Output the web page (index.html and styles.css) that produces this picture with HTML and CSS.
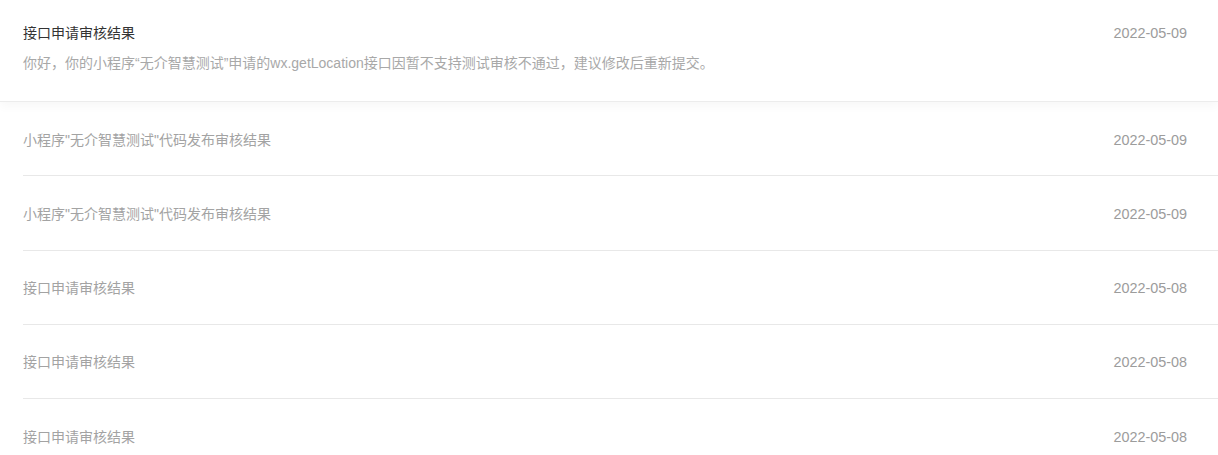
FILE: index.html
```html
<!DOCTYPE html>
<html lang="zh">
<head>
<meta charset="utf-8">
<title>消息</title>
<link rel="stylesheet" href="styles.css">
</head>
<body>
<ul class="msg-list">
  <li class="msg msg-open">
    <div class="msg-main">
      <div class="msg-title">接口申请审核结果</div>
      <div class="msg-desc">你好，你的小程序“无介智慧测试”申请的wx.getLocation接口因暂不支持测试审核不通过，建议修改后重新提交。</div>
    </div>
    <div class="msg-date">2022-05-09</div>
  </li>
  <li class="msg">
    <div class="msg-main"><div class="msg-title">小程序"无介智慧测试"代码发布审核结果</div></div>
    <div class="msg-date">2022-05-09</div>
  </li>
  <li class="msg">
    <div class="msg-main"><div class="msg-title">小程序"无介智慧测试"代码发布审核结果</div></div>
    <div class="msg-date">2022-05-09</div>
  </li>
  <li class="msg">
    <div class="msg-main"><div class="msg-title">接口申请审核结果</div></div>
    <div class="msg-date">2022-05-08</div>
  </li>
  <li class="msg">
    <div class="msg-main"><div class="msg-title">接口申请审核结果</div></div>
    <div class="msg-date">2022-05-08</div>
  </li>
  <li class="msg">
    <div class="msg-main"><div class="msg-title">接口申请审核结果</div></div>
    <div class="msg-date">2022-05-08</div>
  </li>
</ul>
</body>
</html>
```

FILE: styles.css
```css
* { box-sizing: border-box; }
html, body {
  margin: 0;
  padding: 0;
  background: #fff;
  overflow: hidden;
}
body {
  font-family: "Liberation Sans", "Noto Sans CJK SC", sans-serif;
  font-size: 14px;
  line-height: 20px;
  color: #999;
}
.msg-list {
  list-style: none;
  margin: 0;
  padding: 0;
}
.msg {
  display: flex;
  justify-content: space-between;
  align-items: flex-start;
  margin-left: 23px;
  padding: 27.6px 31px 25.7px 0;
  border-bottom: 1px solid #e8e8e8;
}
.msg:last-child { border-bottom: none; }
.msg-open {
  margin-left: 0;
  padding: 23px 31px 27px 23px;
  height: 102px;
  border-bottom: 1px solid #ececec;
  box-shadow: 0 4px 10px rgba(0, 0, 0, 0.035);
  position: relative;
}
.msg-title {
  color: #a3a3a3;
}
.msg-open .msg-title {
  color: #333;
}
.msg-desc {
  margin-top: 10px;
  color: #a8a8a8;
}
.msg-date {
  color: #9c9c9c;
  font-size: 14.4px;
  white-space: nowrap;
}
```
